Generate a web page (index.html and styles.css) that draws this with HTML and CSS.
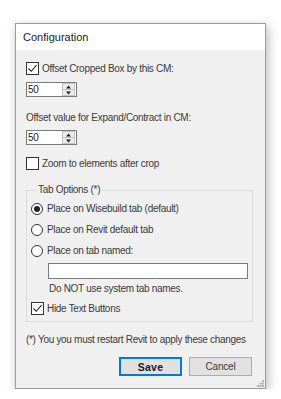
FILE: index.html
```html
<!DOCTYPE html>
<html>
<head>
<meta charset="utf-8">
<link rel="stylesheet" href="styles.css">
</head>
<body>
<div class="window">
  <div class="titlebar">Configuration</div>
  <div class="content">
    <div class="row r1"><span class="cb"><svg width="11" height="11" viewBox="0 0 11 11"><path d="M1.5 5.5 L4.2 8.3 L9.6 2.2" fill="none" stroke="#222" stroke-width="1.1"/></svg></span><span class="txt">Offset Cropped Box by this CM:</span></div>
    <div class="spin s1"><span class="val">50</span><span class="btns"><span class="sb"><svg width="7" height="4" viewBox="0 0 7 4"><path d="M3.5 0.5 L6 3.5 L1 3.5 Z" fill="#222"/></svg></span><span class="sb"><svg width="7" height="4" viewBox="0 0 7 4"><path d="M1 0.5 L6 0.5 L3.5 3.5 Z" fill="#222"/></svg></span></span></div>
    <div class="lbl l2">Offset value for Expand/Contract in CM:</div>
    <div class="spin s2"><span class="val">50</span><span class="btns"><span class="sb"><svg width="7" height="4" viewBox="0 0 7 4"><path d="M3.5 0.5 L6 3.5 L1 3.5 Z" fill="#222"/></svg></span><span class="sb"><svg width="7" height="4" viewBox="0 0 7 4"><path d="M1 0.5 L6 0.5 L3.5 3.5 Z" fill="#222"/></svg></span></span></div>
    <div class="row r3"><span class="cb"></span><span class="txt">Zoom to elements after crop</span></div>
    <fieldset class="group">
      <legend>Tab Options (*)</legend>
      <div class="row rad rad1"><span class="radio on"></span><span class="txt">Place on Wisebuild tab (default)</span></div>
      <div class="row rad"><span class="radio"></span><span class="txt">Place on Revit default tab</span></div>
      <div class="row rad"><span class="radio"></span><span class="txt">Place on tab named:</span></div>
      <div class="textbox"></div>
      <div class="hint">Do NOT use system tab names.</div>
      <div class="row hide"><span class="cb"><svg width="11" height="11" viewBox="0 0 11 11"><path d="M1.5 5.5 L4.2 8.3 L9.6 2.2" fill="none" stroke="#222" stroke-width="1.1"/></svg></span><span class="txt">Hide Text Buttons</span></div>
    </fieldset>
    <div class="note">(*) You you must restart Revit to apply these changes</div>
    <div class="buttons">
      <button class="btn save">Save</button>
      <button class="btn cancel">Cancel</button>
    </div>
  </div>
  <div class="grip"><svg width="7" height="7" viewBox="0 0 7 7"><g fill="#b4b4b4"><rect x="5" y="0" width="2" height="2"/><rect x="2.5" y="2.5" width="2" height="2"/><rect x="5" y="2.5" width="2" height="2"/><rect x="0" y="5" width="2" height="2"/><rect x="2.5" y="5" width="2" height="2"/><rect x="5" y="5" width="2" height="2"/></g></svg></div>
</div>
</body>
</html>
```

FILE: styles.css
```css
* { box-sizing: border-box; }
html, body { margin: 0; padding: 0; background: #ffffff; }
body {
  padding: 23px 0 0 15px;
  font-family: "Liberation Sans", Arial, sans-serif;
  font-size: 10px;
  letter-spacing: -0.3px;
  color: #3a3a3a;
}
.window {
  position: relative;
  width: 251px;
  height: 366px;
  border: 1px solid #9c9c9c;
  background: #f0f0f0;
  box-shadow: 2px 3px 10px rgba(0,0,0,0.28);
  display: flex;
  flex-direction: column;
}
.titlebar {
  height: 26px;
  background: #ffffff;
  font-size: 11px;
  letter-spacing: 0;
  line-height: 27px;
  padding-left: 7px;
  color: #222;
}
.content {
  display: flex;
  flex-direction: column;
  padding: 12px 13px 0 10px;
}
.row {
  display: flex;
  align-items: center;
  height: 13px;
  line-height: 13px;
  white-space: nowrap;
}
.cb {
  width: 13px;
  height: 13px;
  border: 1px solid #333;
  background: #fff;
  display: flex;
  align-items: center;
  justify-content: center;
  flex: none;
}
.row .txt { margin-left: 3px; }
.spin {
  width: 51px;
  height: 15px;
  border: 1px solid #7a7a7a;
  background: #fff;
  display: flex;
  align-items: stretch;
}
.s1 { margin-top: 7px; }
.s2 { margin-top: 6px; }
.val {
  flex: 1;
  font-size: 10px;
  line-height: 13px;
  padding-left: 1px;
  color: #222;
}
.btns {
  width: 13px;
  display: flex;
  flex-direction: column;
  margin: 0 1px 0 0;
}
.sb {
  flex: 1;
  background: #ececec;
  border: 1px solid #c4c4c4;
  display: flex;
  align-items: center;
  justify-content: center;
}
.sb + .sb { border-top: none; }
.lbl {
  margin-top: 15px;
  height: 12px;
  line-height: 12px;
  white-space: nowrap;
}
.r3 { margin-top: 12px; }
.group {
  margin: 14px 0 0 0;
  width: 227px;
  border: 1px solid #dcdcdc;
  padding: 0 0 6px 4px;
  min-width: 0;
  display: flex;
  flex-direction: column;
}
.group legend {
  font-size: 10px;
  line-height: 12px;
  padding: 0 2px;
  margin-left: 5px;
}
.rad { margin-top: 8px; }
.rad1 { margin-top: 6px; }
.rad .txt { margin-left: 4px; }
.radio {
  width: 12px;
  height: 12px;
  border: 1px solid #333;
  border-radius: 50%;
  background: #fff;
  display: flex;
  align-items: center;
  justify-content: center;
  flex: none;
}
.radio.on::after {
  content: "";
  width: 6px;
  height: 6px;
  border-radius: 50%;
  background: #222;
}
.textbox {
  margin: 6px 0 0 17px;
  width: 200px;
  height: 16px;
  border: 1px solid #7a7a7a;
  background: #fff;
}
.hint {
  margin: 4px 0 0 18px;
  height: 12px;
  line-height: 12px;
  white-space: nowrap;
}
.hide { margin-top: 7px; }
.note {
  margin-top: 12px;
  height: 12px;
  line-height: 12px;
  white-space: nowrap;
}
.buttons {
  margin-top: 11px;
  display: flex;
  justify-content: flex-end;
  gap: 7px;
  padding-right: 0;
}
.btn {
  width: 63px;
  height: 19px;
  margin: 0;
  padding: 0;
  font-family: "Liberation Sans", Arial, sans-serif;
  font-size: 10px;
  letter-spacing: -0.2px;
  color: #3a3a3a;
  background: #e1e1e1;
  border: 1px solid #adadad;
}
.btn.save {
  font-weight: bold;
  font-size: 10.5px;
  letter-spacing: 0.3px;
  color: #1a1a1a;
  border: 2px solid #0078d7;
}
.grip {
  position: absolute;
  right: 1px;
  bottom: 1px;
  width: 7px;
  height: 7px;
  line-height: 0;
}
```
